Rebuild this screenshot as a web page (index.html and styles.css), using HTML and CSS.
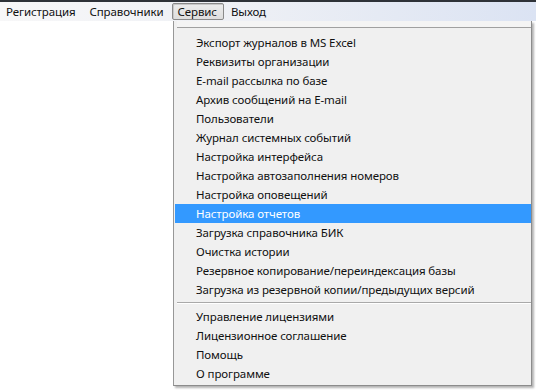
FILE: index.html
```html
<!DOCTYPE html>
<html lang="ru">
  <head>
    <meta charset="UTF-8" />
    <title>Сервис</title>
    <link rel="stylesheet" href="styles.css">
  </head>
  <body>
    <div class="topline"></div>
    <div class="menubar">
      <span class="menubar-item">Регистрация</span>
      <span class="menubar-item">Справочники</span>
      <span class="menubar-item active">Сервис</span>
      <span class="menubar-item">Выход</span>
    </div>

    <div class="dropdown">
      <div class="dropdown-top"></div>
      <ul class="menu-list">
        <li>Экспорт журналов в MS Excel</li>
        <li>Реквизиты организации</li>
        <li>E-mail рассылка по базе</li>
        <li>Архив сообщений на E-mail</li>
        <li>Пользователи</li>
        <li>Журнал системных событий</li>
        <li>Настройка интерфейса</li>
        <li>Настройка автозаполнения номеров</li>
        <li>Настройка оповещений</li>
        <li class="selected">Настройка отчетов</li>
        <li>Загрузка справочника БИК</li>
        <li>Очистка истории</li>
        <li>Резервное копирование/переиндексация базы</li>
        <li>Загрузка из резервной копии/предыдущих версий</li>
        <li class="separator"></li>
        <li>Управление лицензиями</li>
        <li>Лицензионное соглашение</li>
        <li>Помощь</li>
        <li>О программе</li>
      </ul>
    </div>
  </body>
</html>
```

FILE: styles.css
```css
body {
  margin: 0;
  background: #fff;
  font-family: "Noto Sans", "Open Sans", sans-serif;
  font-size: 11.5px;
  letter-spacing: -0.1px;
  color: #111;
}
.topline {
  height: 2px;
  background: #2e3238;
}
.menubar {
  display: flex;
  align-items: center;
  height: 19px;
  background: linear-gradient(90deg, #f7f7f8 0%, #eef0f5 45%, #dbe3f3 100%);
}
.menubar-item {
  padding: 0 6px 0 5px;
  margin-right: 1px;
  line-height: 15px;
  border: 1px solid transparent;
}
.menubar-item.active {
  border-color: #8a8a8a;
  border-radius: 2px;
  background: linear-gradient(#ececec, #dedede);
  box-shadow: inset 1px 1px 0 #c8c8c8;
}
.dropdown {
  position: absolute;
  left: 173px;
  top: 21px;
  width: 357px;
  height: 364px;
  background: #f0f0f0;
  border-left: 1px solid #979797;
  border-right: 1px solid #8c8c8c;
  border-bottom: 1px solid #8c8c8c;
  box-shadow: 2px 2px 2px rgba(0, 0, 0, 0.3);
}
.dropdown-top {
  height: 6px;
  margin-left: 3px;
  background: #f4f4f4;
  border-bottom: 1px solid #a0a0a0;
}
.menu-list {
  list-style: none;
  margin: 5px 0 0 1px;
  padding: 0;
}
.menu-list li {
  height: 19px;
  line-height: 19px;
  padding-left: 21px;
  white-space: nowrap;
}
.menu-list li.selected {
  background: #3399ff;
  color: #fff;
}
.menu-list li.separator {
  height: 1px;
  margin: 3px 0 3px 2px;
  padding: 0;
  background: #a9a9a9;
  border-bottom: 1px solid #fff;
}
```
